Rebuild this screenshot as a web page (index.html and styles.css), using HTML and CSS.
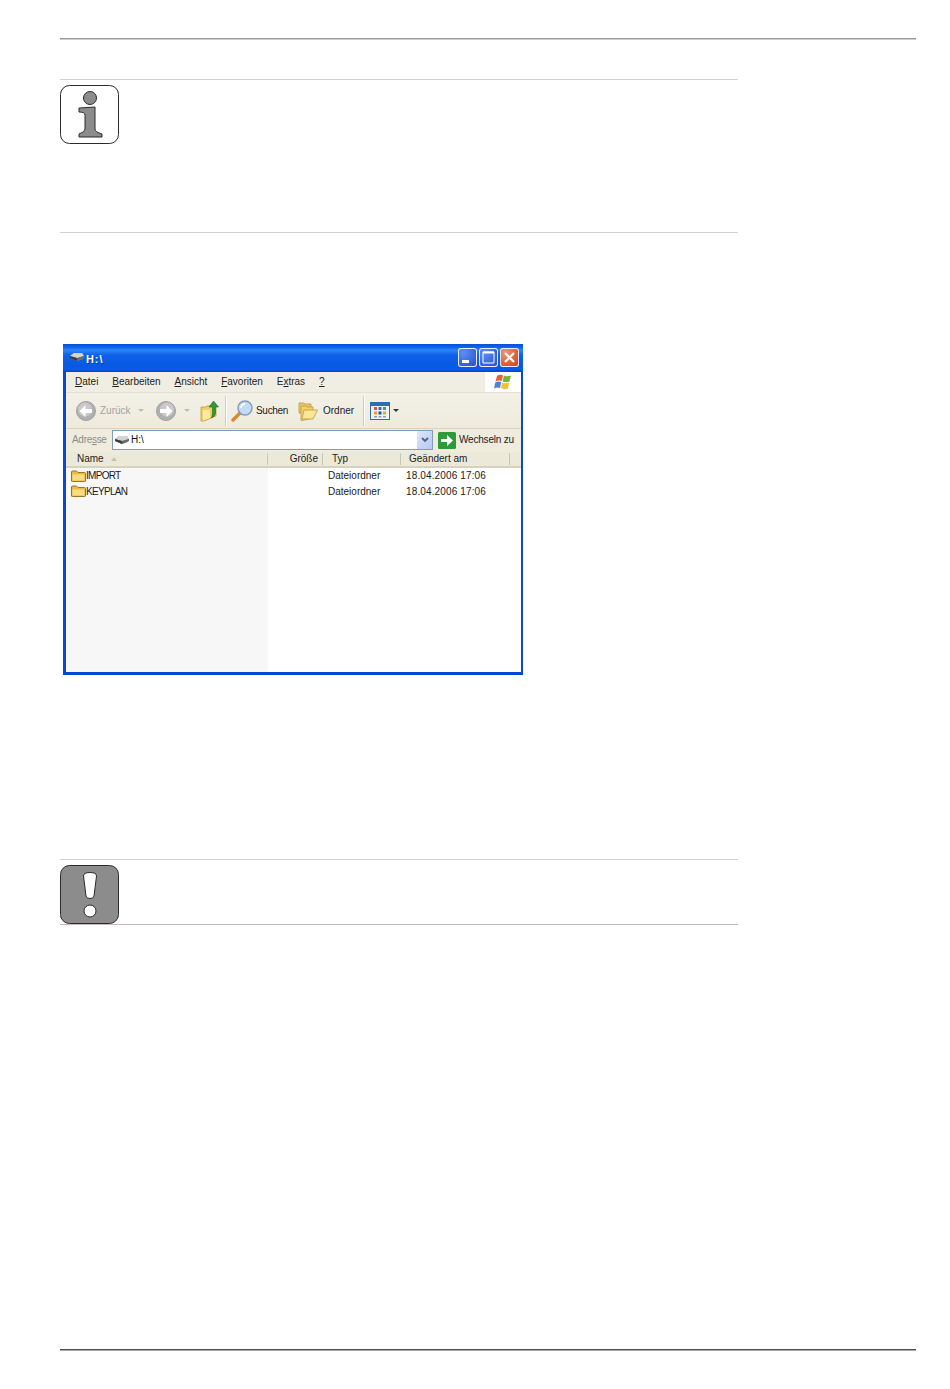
FILE: index.html
```html
<!DOCTYPE html>
<html lang="de">
<head>
<meta charset="utf-8">
<title>H:\</title>
<link rel="stylesheet" href="styles.css">
</head>
<body>
<svg class="defs" width="0" height="0" aria-hidden="true">
  <defs>
    <symbol id="hdd" viewBox="0 0 16 10">
      <path d="M1 4 5 1h8l2 3-1 3-6 2-7-3z" fill="#8d8d8d"/>
      <path d="M1 4 8 6l7-2-2-3H5z" fill="#d4d4d4"/>
      <path d="M1 4 8 6v3L1 6z" fill="#3c3c3c"/>
      <path d="M8 6l7-2v2L8 9z" fill="#6a6a6a"/>
    </symbol>
    <symbol id="folder" viewBox="0 0 15 12">
      <path d="M.5 11V2Q.5 1 1.500 1h4l1.500 1.500h6.500q1 0 1 1V11q0 .5-1 .5H1.500q-1 0-1-.5z" fill="#e9b949" stroke="#9a7620"/>
      <path d="M1.500 4.500h12V10.500h-12z" fill="#f8dc80"/>
    </symbol>
    <symbol id="back" viewBox="0 0 20 20">
      <circle cx="10" cy="10" r="9.500" fill="#b0b0b0" stroke="#a0a0a0"/>
      <circle cx="9" cy="8.500" r="7" fill="#c9c9c9"/>
      <path d="M3.500 10l6-6v4H16v4H9.500v4z" fill="#fff"/>
    </symbol>
  </defs>
</svg>

<div class="page">
  <hr class="rule">

  <section class="notice notice-info">
    <svg class="notice-icon" viewBox="0 0 60 60" width="60" height="60" role="img" aria-label="Hinweis">
      <rect x=".5" y=".5" width="58" height="58" rx="9" fill="#fff" stroke="#2b2b2b"/>
      <circle cx="30" cy="13" r="6.500" fill="#8c8c8c" stroke="#2b2b2b"/>
      <path d="M19 23 35 22V44Q35 47 42 49V52H19V49Q25 47 25 44V30Q25 27 19 27Z" fill="#8c8c8c" stroke="#2b2b2b"/>
    </svg>
  </section>

  <div class="window">
    <div class="titlebar">
      <svg class="title-drive" width="16" height="10"><use href="#hdd"/></svg>
      <span class="title-text">H:\</span>
      <div class="win-buttons">
        <span class="win-btn">
          <svg viewBox="0 0 19 19" width="19" height="19"><rect x="4" y="12" width="7" height="3" fill="#fff"/></svg>
        </span>
        <span class="win-btn">
          <svg viewBox="0 0 19 19" width="19" height="19"><path d="M4 4h11v11H4z" fill="none" stroke="#fff"/><path d="M4 4.500h11" stroke="#fff" stroke-width="2"/></svg>
        </span>
        <span class="win-btn win-close">
          <svg viewBox="0 0 19 19" width="19" height="19"><path d="M5 5l9 9M14 5l-9 9" stroke="#fff" stroke-width="2.200"/></svg>
        </span>
      </div>
    </div>

    <div class="menubar">
      <nav class="menu">
        <span><u>D</u>atei</span>
        <span><u>B</u>earbeiten</span>
        <span><u>A</u>nsicht</span>
        <span><u>F</u>avoriten</span>
        <span>E<u>x</u>tras</span>
        <span><u>?</u></span>
      </nav>
      <div class="logo-box">
        <svg viewBox="0 0 18 16" width="18" height="16">
          <path d="M3 2Q6 0 9 1.500L7.500 7Q5 6 1.500 7.500z" fill="#e2603a"/>
          <path d="M10 1.500Q13 3 17 1.500L15.500 7.500Q12 9 8.500 7.500z" fill="#79b441"/>
          <path d="M1.300 8.500Q4 7 7.200 8L6 14Q3 13 0 14.500z" fill="#4a83d8"/>
          <path d="M8.200 8.500Q12 10 15.200 8.500L14 14.500Q10 16 7 14z" fill="#f2c230"/>
        </svg>
      </div>
    </div>

    <div class="toolbar">
      <svg class="tb-back" width="20" height="20"><use href="#back"/></svg>
      <span class="tb-label tb-disabled">Zurück</span>
      <span class="tb-caret tb-caret-gray"></span>
      <svg class="tb-forward" width="20" height="20"><use href="#back" transform="matrix(-1 0 0 1 20 0)"/></svg>
      <span class="tb-caret tb-caret-gray tb-caret-fwd"></span>
      <svg class="tb-up" viewBox="0 0 20 22" width="20" height="22">
        <path d="M1 7h5l1-1h9v10L4 21H1z" fill="#f2cf63" stroke="#c29a35" stroke-width=".8"/>
        <path d="M3 10h7v8l-7 2.500z" fill="#fbe9a6"/>
        <path d="M13.500 1l5 6h-3v6q0 3-4 5 1-3 1-5V7h-3.500z" fill="#2f9a35" stroke="#1c6d22" stroke-width=".6"/>
      </svg>
      <span class="tb-sep tb-sep-a"></span>
      <svg class="tb-search" viewBox="0 0 22 22" width="22" height="22">
        <path d="M2 20l7-7" stroke="#d98a2b" stroke-width="3.400" stroke-linecap="round"/>
        <circle cx="14" cy="8" r="7" fill="#c3dcf5" stroke="#7e9cbd" stroke-width="1.400"/>
        <path d="M10 8a4 4 0 0 1 4-4" stroke="#fff" fill="none" stroke-width="1.800"/>
      </svg>
      <span class="tb-label tb-suchen">Suchen</span>
      <svg class="tb-folders" viewBox="0 0 20 20" width="20" height="20">
        <path d="M1 2h5l1 1h6v9H1z" fill="#eec763" stroke="#bd9a3e" stroke-width=".8"/>
        <path d="M3 5h5l1 1h6v11l-11 2.500H3z" fill="#f1d26f" stroke="#bd9a3e" stroke-width=".8"/>
        <path d="M6 9h13.500l-4.500 9H4z" fill="#fbe596" stroke="#bd9a3e" stroke-width=".8"/>
      </svg>
      <span class="tb-label tb-ordner">Ordner</span>
      <span class="tb-sep tb-sep-b"></span>
      <svg class="tb-views" viewBox="0 0 20 18" width="20" height="18">
        <rect x=".5" y=".5" width="19" height="17" fill="#eef4fb" stroke="#2f6cb4"/>
        <rect x="1" y="1" width="18" height="3" fill="#2f6cb4"/>
        <path d="M4 5h3v3H4z" fill="#d9534a"/><path d="M8.500 5h3v3h-3z" fill="#3a6cc0"/><path d="M13 5h3v3h-3z" fill="#3aa85a"/>
        <path d="M4 9.500h3v3H4z" fill="#ee9a33"/><path d="M8.500 9.500h3v3h-3z" fill="#1f4f96"/><path d="M13 9.500h3v3h-3z" fill="#d2ad2e"/>
        <path d="M4 14h3v1.500H4zM8.500 14h3v1.500h-3zM13 14h3v1.500h-3z" fill="#9a9a9a"/>
      </svg>
      <span class="tb-caret"></span>
    </div>

    <div class="addressbar">
      <span class="addr-label">Adre<u>s</u>se</span>
      <div class="addr-input">
        <svg width="16" height="10"><use href="#hdd"/></svg>
        <span class="addr-value">H:\</span>
        <span class="addr-drop">
          <svg viewBox="0 0 14 16" width="14" height="16"><path d="M4 6l3 3 3-3" fill="none" stroke="#4d6185" stroke-width="1.800"/></svg>
        </span>
      </div>
      <svg class="go-icon" viewBox="0 0 18 17" width="18" height="17">
        <rect width="18" height="17" rx="1.500" fill="#2f9a3a"/>
        <path d="M3 7h6V3l6 5.500L9 14v-4H3z" fill="#fff"/>
      </svg>
      <span class="go-label">Wechseln zu</span>
    </div>

    <div class="columns">
      <div class="col col-name">Name<span class="sort-arrow"></span></div>
      <div class="col col-size">Größe</div>
      <div class="col col-type">Typ</div>
      <div class="col col-date">Geändert am</div>
    </div>

    <div class="list">
      <div class="row">
        <div class="cell-name"><svg width="15" height="12"><use href="#folder"/></svg>IMPORT</div>
        <div></div>
        <div class="cell-type">Dateiordner</div>
        <div class="cell-date">18.04.2006 17:06</div>
      </div>
      <div class="row">
        <div class="cell-name"><svg width="15" height="12"><use href="#folder"/></svg>KEYPLAN</div>
        <div></div>
        <div class="cell-type">Dateiordner</div>
        <div class="cell-date">18.04.2006 17:06</div>
      </div>
    </div>
  </div>

  <section class="notice notice-warn">
    <svg class="notice-icon" viewBox="0 0 60 60" width="60" height="60" role="img" aria-label="Achtung">
      <rect x=".5" y=".5" width="58" height="58" rx="9" fill="#8c8c8c" stroke="#2b2b2b"/>
      <path d="M23.500 11Q23.500 7.500 30 7.500T36.500 11L34 31Q33.500 33.500 30 33.500T26 31Z" fill="#fff" stroke="#2b2b2b"/>
      <circle cx="30" cy="46" r="6" fill="#fff" stroke="#2b2b2b"/>
    </svg>
  </section>

  <hr class="rule rule-bottom">
</div>
</body>
</html>
```
FILE: styles.css
```css
* { box-sizing: border-box; }
html, body { margin: 0; padding: 0; background: #fff; }
body { font-family: "Liberation Sans", Arial, sans-serif; font-size: 10px; color: #222; }
.defs { display: block; height: 0; }
svg { display: block; flex: none; }

.page { height: 1389px; padding: 38px 34px 0 60px; }
.rule { height: 2px; margin: 0; border: 0; background: linear-gradient(#9a9a9a 50%, #cfcfcf 50%); }
.rule-bottom { margin-top: 424px; background: linear-gradient(#505050 50%, #a8a8a8 50%); }

.notice { width: 678px; border-top: 1px solid #d2d2d2; border-bottom: 1px solid #d2d2d2; padding-top: 5px; }
.notice-info { height: 154px; margin-top: 39px; }
.notice-warn { height: 66px; margin-top: 184px; border-bottom-color: #c4bcbc; }

.window {
  width: 460px; height: 331px; margin: 111px 0 0 3px;
  background: #0a52e0;
  border: solid #0b47d0; border-width: 0 2px 3px 3px;
  border-bottom-color: #0446d8;
  display: flex; flex-direction: column;
}

.titlebar {
  height: 28px; margin: 0 -2px 0 -3px; padding: 0 4px 0 6px;
  display: flex; align-items: center;
  background: linear-gradient(#0a4fd6 0, #0a62ee 3px, #2b86f5 6px, #0e62e8 11px, #0757e2 22px, #0a5ced 25px, #0444c4 28px);
  border-radius: 2px 2px 0 0;
}
.title-drive { margin-bottom: 2px; }
.title-text { margin-left: 1px; padding-top: 2px; font: bold 11px "Liberation Sans", Arial, sans-serif; letter-spacing: .9px; color: #fff; text-shadow: 1px 1px 0 #0a3a9c; }
.win-buttons { margin-left: auto; display: flex; gap: 2px; margin-bottom: 2px; }
.win-btn {
  width: 19px; height: 19px; border-radius: 3px; overflow: hidden;
  background: radial-gradient(circle at 30% 25%, #5f8ff0, #2f5fd8 70%, #2450c4);
  box-shadow: inset 0 0 0 1px #e8eefc;
}
.win-close { background: radial-gradient(circle at 30% 25%, #ee9578, #d8552f 70%, #c23e22); }

.menubar { height: 21px; display: flex; background: #f0eee2; border-bottom: 1px solid #e4e1d2; }
.menu { display: flex; align-items: center; gap: 13.900px; padding-left: 9px; padding-bottom: 1px; font-size: 10px; }
.logo-box { margin-left: auto; width: 36px; background: #fff; display: flex; align-items: center; justify-content: center; }

.toolbar {
  height: 36px; display: flex; align-items: center;
  background: linear-gradient(#f3f1e7, #eeebdd);
  border-bottom: 1px solid #d8d3bc;
}
.tb-back { margin-left: 10px; }
.tb-label { margin-left: 4px; font-size: 10px; }
.tb-disabled { color: #a3a3a3; width: 31px; }
.tb-caret { width: 0; height: 0; margin-left: 3px; border: solid transparent; border-width: 3px 3px 0; border-top-color: #333; }
.tb-caret-gray { margin-left: 7px; border-top-color: #bbb; }
.tb-forward { margin-left: 12px; }
.tb-caret-fwd { margin-left: 8px; }
.tb-up { margin-left: 10px; }
.tb-sep { width: 1px; height: 30px; background: #d3cfba; box-shadow: 1px 0 0 #fff; }
.tb-sep-a { margin-left: 5px; }
.tb-search { margin-left: 5px; }
.tb-suchen { margin-left: 3px; width: 32px; letter-spacing: -.3px; }
.tb-folders { margin-left: 10px; }
.tb-ordner { width: 31px; margin-left: 5px; }
.tb-sep-b { margin-left: 9px; }
.tb-views { margin-left: 6px; }

.addressbar { height: 23px; display: flex; align-items: center; padding-bottom: 1px; background: #efecde; }
.addr-label { margin-left: 6px; width: 40px; padding-bottom: 1px; letter-spacing: -.3px; color: #8c8c8c; }
.addr-input {
  width: 321px; height: 20px; display: flex; align-items: center;
  background: #fff; border: 1px solid #7f9db9; padding-left: 1px;
}
.addr-value { margin-left: 1px; padding-bottom: 1px; font-size: 10px; color: #111; }
.addr-drop { margin-left: auto; width: 15px; height: 18px; background: linear-gradient(135deg, #dfe7fa, #b5c8f2); display: flex; align-items: center; justify-content: center; }
.go-icon { margin-left: 5px; }
.go-label { margin-left: 3px; padding-bottom: 1px; letter-spacing: -.2px; white-space: nowrap; }

.columns {
  height: 16px; display: grid; grid-template-columns: 202px 55px 78px 109px 1fr;
  align-items: center; background: #ece9d8; border-bottom: 2px solid #d6d2bd;
  font-size: 10px;
}
.col { height: 12px; line-height: 12px; border-right: 1px solid #c9c6b4; }
.col-name { padding-left: 11px; display: flex; align-items: center; }
.col-size { text-align: right; padding-right: 4px; }
.col-type { padding-left: 9px; }
.col-date { padding-left: 8px; }
.sort-arrow { width: 0; height: 0; margin-left: 7px; border: solid transparent; border-width: 0 3.500px 4px; border-bottom-color: #c5c2b2; }

.list { flex: 1; background: linear-gradient(to right, #f7f7f7 202px, #fff 202px); }
.row { height: 15.500px; display: grid; grid-template-columns: 202px 55px 83px 1fr; align-items: center; font-size: 10px; color: #1a1a1a; }
.cell-name { padding-left: 5px; display: flex; align-items: center; letter-spacing: -.7px; }
.cell-type { padding-left: 5px; }
.cell-date { letter-spacing: .13px; white-space: nowrap; }
```
